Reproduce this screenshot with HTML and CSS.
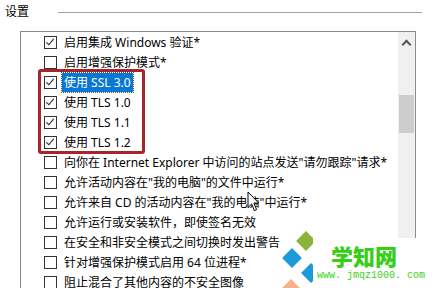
FILE: index.html
```html
<!DOCTYPE html>
<html lang="zh-CN">
  <head>
    <meta charset="UTF-8" />
    <meta name="viewport" content="width=device-width, initial-scale=1.0" />
    <title>设置</title>
    <link rel="stylesheet" href="styles.css">
  </head>
  <body>
    <div class="panel">
      <div class="group-head">
        <span class="group-title">设置</span>
        <span class="group-line"></span>
      </div>

      <div class="listbox">
        <ul class="options">
          <li class="option"><span class="check checked"></span><span class="label">启用集成 Windows 验证*</span></li>
          <li class="option"><span class="check"></span><span class="label">启用增强保护模式*</span></li>
          <li class="option"><span class="check checked"></span><span class="label selected">使用 SSL 3.0</span></li>
          <li class="option"><span class="check checked"></span><span class="label">使用 TLS 1.0</span></li>
          <li class="option"><span class="check checked"></span><span class="label">使用 TLS 1.1</span></li>
          <li class="option"><span class="check checked"></span><span class="label">使用 TLS 1.2</span></li>
          <li class="option"><span class="check"></span><span class="label">向你在 Internet Explorer 中访问的站点发送"请勿跟踪"请求*</span></li>
          <li class="option"><span class="check"></span><span class="label">允许活动内容在"我的电脑"的文件中运行*</span></li>
          <li class="option"><span class="check"></span><span class="label">允许来自 CD 的活动内容在"我的电脑"中运行*</span></li>
          <li class="option"><span class="check"></span><span class="label">允许运行或安装软件，即使签名无效</span></li>
          <li class="option"><span class="check"></span><span class="label">在安全和非安全模式之间切换时发出警告</span></li>
          <li class="option"><span class="check"></span><span class="label">针对增强保护模式启用 64 位进程*</span></li>
          <li class="option"><span class="check"></span><span class="label">阻止混合了其他内容的不安全图像</span></li>
        </ul>
        <div class="scrollbar">
          <span class="arrow-up"></span>
          <span class="thumb"></span>
        </div>
      </div>

      <!-- 标注框 -->
      <div class="mark-box"></div>

      <!-- 鼠标指针 -->
      <svg class="cursor" width="14" height="22" viewBox="0 0 14 22">
        <path d="M1 1 L1 16.5 L4.6 13 L7.4 19.6 L9.6 18.6 L6.9 12.1 L11.8 12.1 Z" fill="#fff" stroke="#000" stroke-width="1" stroke-linejoin="round" />
      </svg>

      <!-- 水印 -->
      <svg class="wm-logo" width="60" height="68" viewBox="0 0 60 68">
        <rect x="-7" y="-7" width="14" height="14" fill="#8cb43c" transform="translate(41 21) rotate(45)" />
        <rect x="-7" y="-7" width="14" height="14" fill="#1c9ad8" transform="translate(27 38) rotate(45)" />
        <rect x="-7" y="-7" width="14" height="14" fill="#1c9ad8" transform="translate(46 53) rotate(45)" />
        <rect x="-7" y="-7" width="14" height="14" fill="#f6b08e" transform="translate(26 69) rotate(45)" />
      </svg>
      <div class="wm-box">
        <div class="wm-name">学知网</div>
        <div class="wm-url">www. jmqz1000. com</div>
      </div>
    </div>
  </body>
</html>
```

FILE: styles.css
```css
body {
  margin: 0;
  padding: 0;
  background-color: #fff;
  font-family: "Noto Sans", "Noto Sans CJK SC", sans-serif;
  font-size: 12px;
  color: #000;
}

.panel {
  position: relative;
  width: 437px;
  height: 288px;
  overflow: hidden;
  background-color: #fff;
}

.group-head {
  display: flex;
  align-items: center;
  height: 20px;
  padding: 2px 15px 0 5px;
}

.group-title {
  font-size: 12px;
  line-height: 20px;
}

.group-line {
  flex: 1;
  margin-left: 29px;
  border-top: 1px solid #a0a0a0;
}

.listbox {
  display: flex;
  width: 394px;
  height: 280px;
  margin: 9px 0 0 20px;
  border: 1px solid #8c8c8c;
}

.options {
  flex: 1;
  margin: 0;
  padding: 0;
  list-style: none;
}

.option {
  display: flex;
  align-items: center;
  height: 20px;
  padding-left: 23px;
  white-space: nowrap;
}

.check {
  position: relative;
  width: 11px;
  height: 11px;
  border: 1px solid #333;
  background-color: #fff;
  flex-shrink: 0;
}

.check.checked::after {
  content: "";
  position: absolute;
  left: 3px;
  top: 0px;
  width: 3px;
  height: 7px;
  border-right: 1px solid #222;
  border-bottom: 1px solid #222;
  transform: rotate(40deg);
}

.label {
  margin-left: 5px;
  padding: 0 2px;
  line-height: 19px;
}

.label.selected {
  background-color: #0a78d2;
  color: #fff;
  outline: 1px dotted #555;
}

.scrollbar {
  position: relative;
  width: 17px;
  background-color: #f0f0f0;
}

.arrow-up {
  position: absolute;
  left: 5px;
  top: 9px;
  width: 5px;
  height: 5px;
  border-left: 2px solid #555;
  border-top: 2px solid #555;
  transform: rotate(45deg);
}

.thumb {
  position: absolute;
  left: 1px;
  right: 1px;
  top: 63px;
  height: 38px;
  background-color: #cdcdcd;
}

.mark-box {
  position: absolute;
  left: 38px;
  top: 69px;
  width: 101px;
  height: 79px;
  border: 3px solid #a8242c;
  border-radius: 3px;
}

.cursor {
  position: absolute;
  left: 247px;
  top: 191px;
}

.wm-logo {
  position: absolute;
  left: 265px;
  top: 220px;
}

.wm-box {
  position: absolute;
  left: 313px;
  top: 238px;
  width: 124px;
  height: 50px;
  background-color: #fff;
}

.wm-name {
  margin: 6px 0 0 18px;
  font-family: "Noto Sans CJK SC", sans-serif;
  font-size: 22px;
  font-weight: 900;
  line-height: 23px;
  color: #36cf18;
}

.wm-url {
  margin: 3px 0 0 4px;
  font-family: "Liberation Mono", monospace;
  font-size: 10px;
  line-height: 12px;
  color: #3ccf22;
  white-space: nowrap;
}
```
